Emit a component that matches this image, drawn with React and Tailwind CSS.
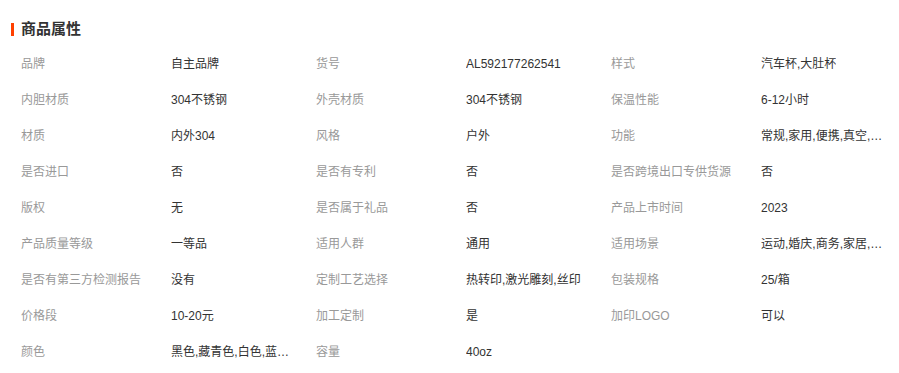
import React from "react";

const rows = [
  ["品牌", "自主品牌", "货号", "AL592177262541", "样式", "汽车杯,大肚杯"],
  ["内胆材质", "304不锈钢", "外壳材质", "304不锈钢", "保温性能", "6-12小时"],
  ["材质", "内外304", "风格", "户外", "功能", "常规,家用,便携,真空,防漏"],
  ["是否进口", "否", "是否有专利", "否", "是否跨境出口专供货源", "否"],
  ["版权", "无", "是否属于礼品", "否", "产品上市时间", "2023"],
  ["产品质量等级", "一等品", "适用人群", "通用", "适用场景", "运动,婚庆,商务,家居,户外"],
  ["是否有第三方检测报告", "没有", "定制工艺选择", "热转印,激光雕刻,丝印", "包装规格", "25/箱"],
  ["价格段", "10-20元", "加工定制", "是", "加印LOGO", "可以"],
  ["颜色", "黑色,藏青色,白色,蓝色,粉色", "容量", "40oz"],
];

function Cell({ label, value }) {
  return (
    <div className="flex items-center w-[295px] shrink-0">
      <div className="w-[150px] shrink-0 text-[#999] truncate">{label}</div>
      <div className="max-w-[122px] text-[#333] truncate">{value}</div>
    </div>
  );
}

export default function App() {
  return (
    <div
      className="w-[899px] h-[373px] bg-white pt-[15px] overflow-hidden"
      style={{ fontFamily: '"Liberation Sans", "Noto Sans CJK SC", sans-serif' }}
    >
      <div className="flex items-center h-[28px] pl-[11px]">
        <span className="w-[3px] h-[13px] bg-[#ff4000] mr-[7px]"></span>
        <h2 className="text-[15px] font-bold text-[#333]">商品属性</h2>
      </div>
      <div className="mt-[3px] pl-[21px] text-[12px]">
        {rows.map((r, i) => (
          <div key={i} className="flex h-[36px] items-center">
            <Cell label={r[0]} value={r[1]} />
            <Cell label={r[2]} value={r[3]} />
            {r[4] && <Cell label={r[4]} value={r[5]} />}
          </div>
        ))}
      </div>
    </div>
  );
}
